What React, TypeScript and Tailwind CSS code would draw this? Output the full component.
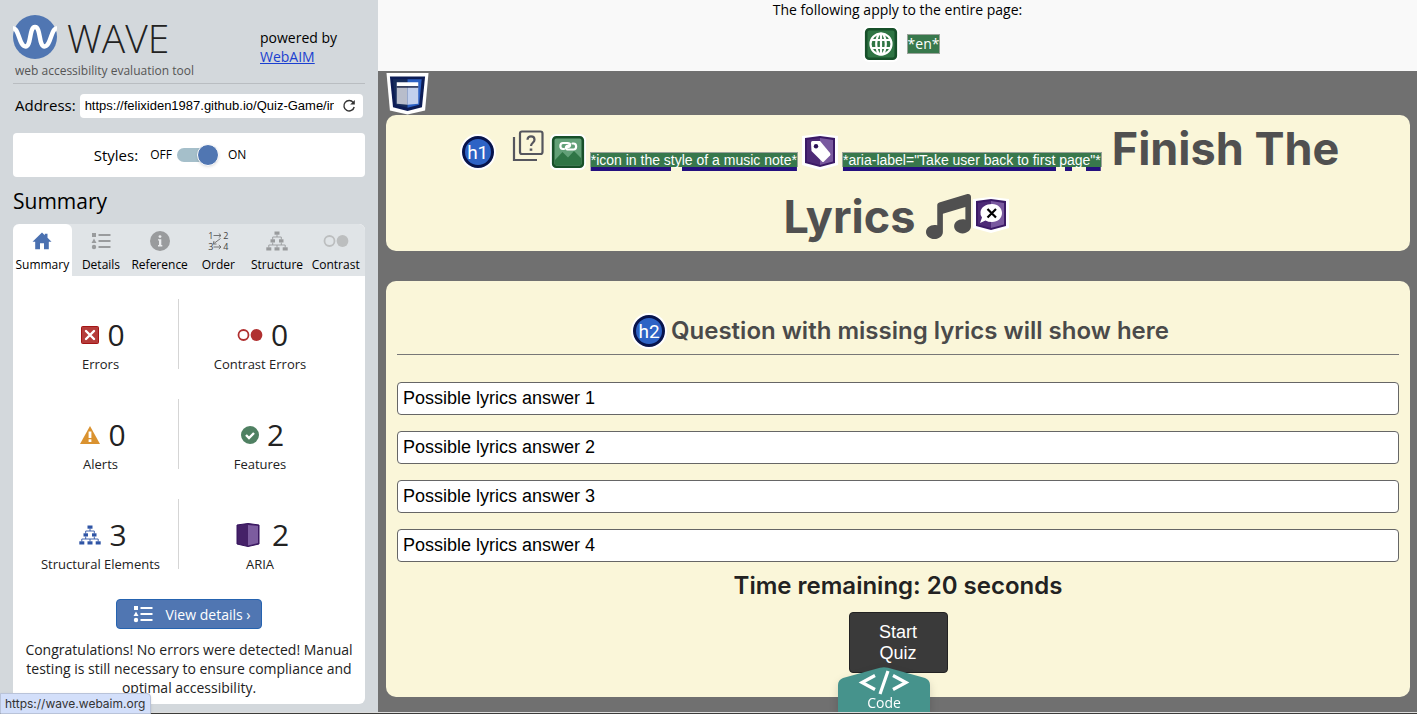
import React from "react";
import { FaMusic } from "react-icons/fa6";

type IconProps = { className?: string };

function WaveLogo({ className }: IconProps) {
  return (
    <svg viewBox="0 0 44 44" className={className} aria-hidden="true">
      <circle cx="22" cy="22" r="22" fill="#5076b2" />
      <path
        d="M0 13.500C6 12.500 6 31.500 12.500 31.500C18.500 31.500 16 12 22 12C28 12 25.500 31.500 31.500 31.500C38 31.500 38 12.500 44 13.500"
        fill="none"
        stroke="#fff"
        strokeWidth="4.400"
      />
    </svg>
  );
}

function ReloadIcon({ className }: IconProps) {
  return (
    <svg viewBox="0 0 14 14" className={className} aria-hidden="true">
      <path d="M11.300 3.600A5.200 5.200 0 1 0 12.200 8" fill="none" stroke="#333" strokeWidth="1.400" />
      <path d="M12.800 1V5.600H8.200Z" fill="#333" />
    </svg>
  );
}

function HomeIcon({ className }: IconProps) {
  return (
    <svg viewBox="0 0 20 20" className={className} aria-hidden="true">
      <path d="M10 1.500L12.800 4.200V2.800H15.500V6.800L19.500 10.700H16.800V18.300H12V12.300H8V18.300H3.200V10.700H.5Z" fill="#4a70b0" />
    </svg>
  );
}

function ListIcon({ className }: IconProps) {
  return (
    <svg viewBox="0 0 20 18" className={className} fill="currentColor" aria-hidden="true">
      <rect x="1" y="1" width="4" height="4" />
      <path d="M3 6.500L5.500 11H.5Z" />
      <circle cx="3" cy="15" r="2.200" />
      <rect x="7.500" y="2" width="12" height="2" />
      <rect x="7.500" y="8" width="12" height="2" />
      <rect x="7.500" y="14" width="12" height="2" />
    </svg>
  );
}

function InfoIcon({ className }: IconProps) {
  return (
    <svg viewBox="0 0 20 20" className={className} aria-hidden="true">
      <circle cx="10" cy="10" r="10" fill="#999b9d" />
      <circle cx="10" cy="5.600" r="1.400" fill="#e9ebed" />
      <path d="M8 8.200H11.300V14H12.300V15.500H8V14H9V9.600H8Z" fill="#e9ebed" />
    </svg>
  );
}

function OrderIcon() {
  return (
    <span className="relative flex h-5 w-5 flex-col justify-between text-[9px] leading-[9px] text-[#444]">
      <span className="flex w-5 justify-between"><span>1</span><span>2</span></span>
      <span className="flex w-5 justify-between"><span>3</span><span>4</span></span>
      <svg viewBox="0 0 20 20" className="absolute inset-0 h-5 w-5" fill="none" stroke="#666" strokeWidth=".9" aria-hidden="true">
        <path d="M5.500 4.500H13M10.800 2.500L13 4.500L10.800 6.500M5.500 16H13M10.800 14L13 16L10.800 18M12.500 7.500L5.500 12.800M6 10L5.200 13H8.500" />
      </svg>
    </span>
  );
}

function TreeIcon({ className }: IconProps) {
  return (
    <svg viewBox="0 0 22 20" className={className} fill="currentColor" aria-hidden="true">
      <rect x="8.500" y=".5" width="5" height="3.200" />
      <rect x="4.500" y="8.300" width="4.500" height="3.200" />
      <rect x="13" y="8.300" width="4.500" height="3.200" />
      <rect x=".3" y="16.300" width="5" height="3.200" />
      <rect x="8.500" y="16.300" width="5" height="3.200" />
      <rect x="16.700" y="16.300" width="5" height="3.200" />
      <path
        d="M11 3.500V6M6.700 8.500V6H15.300V8.500M6.700 11.500V14M15.300 11.500V14M2.800 16.500V14H19.200V16.500M11 14V16.500"
        fill="none"
        stroke="currentColor"
        strokeWidth=".9"
      />
    </svg>
  );
}

function CirclesIcon({ className }: IconProps) {
  return (
    <svg viewBox="0 0 26 12" className={className} aria-hidden="true">
      <circle cx="6.500" cy="6" r="5" fill="none" stroke="currentColor" strokeWidth="1.800" />
      <circle cx="19.500" cy="6" r="5.900" fill="currentColor" />
    </svg>
  );
}

function ErrorIcon({ className }: IconProps) {
  return (
    <svg viewBox="0 0 18 18" className={className} aria-hidden="true">
      <rect x=".5" y=".5" width="17" height="17" rx="1" fill="#b53c3a" stroke="#a31515" />
      <path d="M5 5L13 13M13 5L5 13" stroke="#fff" strokeWidth="2.400" strokeLinecap="round" />
    </svg>
  );
}

function AlertIcon({ className }: IconProps) {
  return (
    <svg viewBox="0 0 20 18" className={className} aria-hidden="true">
      <path d="M10 0L20 18H0Z" fill="#da922f" />
      <path d="M8.600 5.500H11.400V12H8.600ZM8.600 13.300H11.400V16H8.600Z" fill="#fff" />
    </svg>
  );
}

function FeatureIcon({ className }: IconProps) {
  return (
    <svg viewBox="0 0 18 18" className={className} aria-hidden="true">
      <circle cx="9" cy="9" r="9" fill="#4f8062" />
      <path d="M5 9L8 12L13 7" fill="none" stroke="#fff" strokeWidth="2.400" />
    </svg>
  );
}

function AriaIcon({ className }: IconProps) {
  return (
    <svg viewBox="0 0 24 24" className={className} aria-hidden="true">
      <path d="M1 2L12 .5L23 2V21L12 23.500L1 21Z" fill="#452168" stroke="#34125c" />
      <path d="M12 2L22 3V20L12 22.500Z" fill="#7c5c9f" />
    </svg>
  );
}

function GlobeBadge({ className }: IconProps) {
  return (
    <svg viewBox="0 0 36 36" className={className} aria-hidden="true">
      <rect width="36" height="36" rx="6" fill="#fff" />
      <rect x="3.200" y="3.200" width="29.600" height="29.600" rx="3" fill="#2f7544" stroke="#17502a" strokeWidth="2.600" />
      <g fill="none" stroke="#fff" strokeWidth="2.200">
        <circle cx="18" cy="18" r="10.500" />
        <ellipse cx="18" cy="18" rx="4.800" ry="10.500" />
        <path d="M18 7.500V28.500M9 14H27M9 22H27" />
      </g>
    </svg>
  );
}

function BannerBadge({ className }: IconProps) {
  return (
    <svg viewBox="0 0 44 43" className={className} aria-hidden="true">
      <path d="M.5 .5H43.500L40 39L22 43L4 39Z" fill="#fff" />
      <path d="M4 4H40L36.800 35.500L22 39.500L7.200 35.500Z" fill="#0c1c55" />
      <path d="M7 7H22V36L10 33Z" fill="#172d5c" />
      <path d="M22 7H36.500L34 33L22 36Z" fill="#2c61c4" />
      <path d="M11 14H22V33L11 32Z" fill="#b8bdcb" />
      <path d="M22 14H33V32L22 33Z" fill="#c2d0ed" />
      <rect x="11" y="10" width="22" height="4" fill="#fff" />
      <path d="M11 14.800H33" stroke="#101a3c" strokeWidth="1.400" />
    </svg>
  );
}

function HeadingBadge({ label }: { label: string }) {
  return (
    <span className="flex h-9 w-9 shrink-0 items-center justify-center rounded-full bg-white">
      <span className="flex h-8 w-8 items-center justify-center rounded-full border-3 border-[#07144d] bg-[#2e63c5] font-['Roboto',sans-serif] text-[19px] leading-none font-normal text-white">
        {label}
      </span>
    </span>
  );
}

function QuizBoxIcon({ className }: IconProps) {
  return (
    <svg viewBox="0 0 32 32" className={className} fill="none" stroke="#55565e" strokeWidth="2.200" aria-hidden="true">
      <rect x="8" y="1.500" width="22.500" height="22.500" rx="2" />
      <path d="M2 7V30H25" />
      <path d="M15.500 9.700C15.500 5.200 22.500 5.200 22.500 9.700C22.500 12.500 19 13 19 16" />
      <path d="M19 18.500V20.800" strokeWidth="2.600" />
    </svg>
  );
}

function LinkedImageBadge({ className }: IconProps) {
  return (
    <svg viewBox="0 0 36 36" className={className} aria-hidden="true">
      <rect width="36" height="36" rx="6" fill="#fff" />
      <rect x="3.200" y="3.200" width="29.600" height="29.600" rx="3" fill="#62a078" stroke="#17502a" strokeWidth="2.600" />
      <path d="M5 26L12.500 18L18 23.500L24 17L31 24V31H5Z" fill="#2f7546" />
      <path
        d="M14 15H13C9.500 15 9.500 9 13 9H17.500C21.500 9 20.500 13 17.500 13M22.500 9.500H23.500C27 9.500 27 15.500 23.500 15.500H18.500C14.500 15.500 15.500 11.500 18.500 11.500"
        fill="none"
        stroke="#fff"
        strokeWidth="2.200"
        strokeLinecap="round"
      />
    </svg>
  );
}

function AriaBadge({ className, children }: { className?: string; children: React.ReactNode }) {
  return (
    <svg viewBox="0 0 36 36" className={className} aria-hidden="true">
      <path d="M0 2L18 0L36 2V31L18 36L0 31Z" fill="#fff" />
      <path d="M3 4L18 2L33 4V29L18 33L3 29Z" fill="#3b1a66" />
      <path d="M5 6L18 4V31L5 27.500Z" fill="#4d2a76" />
      <path d="M18 4L31 6V27.500L18 31Z" fill="#79599f" />
      {children}
    </svg>
  );
}

function Annotation({ children }: { children: React.ReactNode }) {
  return (
    <span className="mt-[14px] shrink-0 border border-b-0 border-[#9aa39a] bg-[#38784c] font-['Liberation_Sans',Arial,sans-serif] text-[14px] leading-[14px] font-normal whitespace-nowrap text-white underline decoration-[#24107e] decoration-4 underline-offset-2">
      {children}
    </span>
  );
}

const tabs = [
  { name: "Summary", icon: <HomeIcon className="h-5 w-5" /> },
  { name: "Details", icon: <ListIcon className="h-[18px] w-5 text-[#999b9d]" /> },
  { name: "Reference", icon: <InfoIcon className="h-5 w-5" /> },
  { name: "Order", icon: <OrderIcon /> },
  { name: "Structure", icon: <TreeIcon className="h-5 w-[22px] text-[#999b9d]" /> },
  { name: "Contrast", icon: <CirclesIcon className="h-3 w-[26px] text-[#bcbebf]" /> },
];

const stats = [
  { name: "Errors", count: 0, icon: <ErrorIcon className="h-[18px] w-[18px]" /> },
  { name: "Contrast Errors", count: 0, icon: <CirclesIcon className="h-3 w-[26px] text-[#b03030]" /> },
  { name: "Alerts", count: 0, icon: <AlertIcon className="h-[18px] w-5" /> },
  { name: "Features", count: 2, icon: <FeatureIcon className="h-[18px] w-[18px]" /> },
  { name: "Structural Elements", count: 3, icon: <TreeIcon className="h-5 w-[22px] text-[#2f55a5]" /> },
  { name: "ARIA", count: 2, icon: <AriaIcon className="mr-1 h-6 w-6" /> },
];

function Sidebar() {
  return (
    <aside className="flex w-[378px] shrink-0 flex-col bg-[#d3d8dc] px-[13px] pb-2">
      <header className="flex h-[83px] shrink-0 justify-between pt-[15px]">
        <div>
          <div className="flex items-center gap-[10px]">
            <WaveLogo className="h-11 w-11" />
            <span className="pt-px text-[39px] leading-[43px] font-light text-[#222]">WAVE</span>
          </div>
          <p className="pl-[2px] text-[12px] leading-6 text-[#555]">web accessibility evaluation tool</p>
        </div>
        <p className="w-[105px] pt-[13px] text-[14px] leading-[19px]">
          powered by
          <br />
          <a href="#webaim" className="text-[#1a3fd0] underline">WebAIM</a>
        </p>
      </header>
      <div className="flex shrink-0 items-center gap-1 border-t border-[#b9bdc1] pt-[9px] pl-[2px]">
        <label htmlFor="address" className="pb-[2px] text-[15px] leading-6">Address:</label>
        <div className="mr-[2px] flex h-6 min-w-0 flex-1 items-center rounded bg-white pr-[7px] pl-[5px]">
          <input
            id="address"
            type="text"
            defaultValue="https://felixiden1987.github.io/Quiz-Game/index.html"
            className="w-0 min-w-0 flex-1 bg-transparent font-['Liberation_Sans',Arial,sans-serif] text-[13px] outline-none"
          />
          <button type="button" aria-label="Reload" className="ml-2">
            <ReloadIcon className="h-[14px] w-[14px]" />
          </button>
        </div>
      </div>
      <div className="mt-[14px] flex h-11 shrink-0 items-center justify-center rounded bg-white pr-[38px] text-[12px]">
        <span className="mr-3 text-[15px]">Styles:</span>
        <span>OFF</span>
        <label className="relative mx-[5px] h-[22px] w-[42px]">
          <input type="checkbox" defaultChecked aria-label="Styles" className="peer sr-only" />
          <span className="absolute top-1 left-0 h-[14px] w-9 rounded-full bg-[#a5bfca]" />
          <span className="absolute top-0 left-5 h-[22px] w-[22px] rounded-full border border-white bg-[#5076b2] shadow" />
        </label>
        <span className="ml-1">ON</span>
      </div>
      <h2 className="shrink-0 pt-2 text-[21px] leading-8">Summary</h2>
      <section className="mt-[7px] flex min-h-0 flex-1 flex-col overflow-hidden rounded-md bg-white">
        <div role="tablist" className="grid h-[52px] shrink-0 grid-cols-6 bg-[#e0e4e7]">
          {tabs.map((tab, i) => (
            <button
              key={tab.name}
              type="button"
              role="tab"
              aria-selected={i === 0}
              className="flex flex-col items-center text-[12px] aria-selected:rounded-t-md aria-selected:bg-white"
            >
              <span className="flex h-[34px] items-center justify-center">{tab.icon}</span>
              <span className="leading-[14px]">{tab.name}</span>
            </button>
          ))}
        </div>
        <div className="grid shrink-0 grid-cols-2 gap-y-[30px] pt-[23px] pr-[30px] pl-[10px]">
          {stats.map((stat) => (
            <div
              key={stat.name}
              className="flex h-[70px] flex-col items-center pt-4 text-[#222] odd:border-r odd:border-[#d5d5d5] even:pl-[6px]"
            >
              <div className="flex items-center gap-2 pl-[5px]">
                {stat.icon}
                <span className="text-[30px] leading-10">{stat.count}</span>
              </div>
              <span className="text-[13px] leading-[18px] whitespace-nowrap">{stat.name}</span>
            </div>
          ))}
        </div>
        <button
          type="button"
          className="mx-auto mt-[30px] flex h-[30px] shrink-0 items-center gap-3 rounded border border-[#2563b0] bg-[#5076b2] px-[10px] pl-4 text-[14px] text-white"
        >
          <ListIcon className="h-[18px] w-5" />
          <span>View details ›</span>
        </button>
        <p className="shrink-0 px-2 pt-[11px] text-center text-[14px] leading-[19px] text-[#222]">
          Congratulations! No errors were detected! Manual testing is still necessary to ensure compliance and optimal accessibility.
        </p>
      </section>
    </aside>
  );
}

const answers = ["Possible lyrics answer 1", "Possible lyrics answer 2", "Possible lyrics answer 3", "Possible lyrics answer 4"];

function QuizPage() {
  return (
    <main className="relative flex min-w-0 flex-1 flex-col overflow-hidden bg-[#707070]">
      <header className="flex h-[71px] shrink-0 flex-col items-center bg-[#f9f9f9]">
        <p className="text-[14px] leading-5">The following apply to the entire page:</p>
        <div className="mt-[6px] flex items-center gap-2 pl-2">
          <GlobeBadge className="h-9 w-9" />
          <span className="border border-[#9aa39a] bg-[#38784c] text-[14px] leading-[18px] text-white">*en*</span>
        </div>
      </header>
      <div className="flex flex-col pt-px pr-[7px] pl-2">
        <BannerBadge className="h-[43px] w-[43px]" />
        <section className="rounded-[10px] bg-[#faf6d9]">
          <h1 className="font-['Inter',sans-serif] text-[45px] leading-[68px] font-bold text-[#505050]">
            <span className="flex h-[68px] items-center justify-center gap-[10px] pl-[3px]">
              <span className="flex items-center gap-1 pt-[6px]">
                <HeadingBadge label="h1" />
                <QuizBoxIcon className="mb-3 ml-3 h-8 w-8 shrink-0" />
                <LinkedImageBadge className="ml-[2px] h-9 w-9 shrink-0" />
                <Annotation>*icon in the style of a music note*</Annotation>
                <AriaBadge className="h-9 w-9 shrink-0">
                  <path d="M9 8.500Q9 7 10.500 7H18L28 19Q29 20.500 28 21.500L22 27.500Q21 28.500 20 27.500L9.500 17Z" fill="#fff" />
                  <circle cx="14" cy="12.300" r="2.200" fill="#2c1257" />
                </AriaBadge>
                <Annotation>*aria-label="Take user back to first page"*</Annotation>
              </span>
              <span className="whitespace-nowrap">Finish The</span>
            </span>
            <span className="flex h-[68px] items-center justify-center pr-1">
              <span>Lyrics</span>
              <FaMusic className="mb-[2px] ml-[10px] h-[45px] w-[45px]" />
              <AriaBadge className="mb-1 ml-[2px] h-9 w-9">
                <path d="M19 7C25 7 29 11 29 16C29 21 25 25 19 25Q15 25 12.500 23.500L7 26L9 20.500Q7 18 7.500 15C8 10 13 7 19 7Z" fill="#fff" />
                <path d="M14.500 12L23 20.500M23 12L14.500 20.500" stroke="#000" strokeWidth="2.200" />
              </AriaBadge>
            </span>
          </h1>
        </section>
        <section className="mt-[30px] flex flex-col rounded-[10px] bg-[#faf6d9] px-[11px] pt-[31px] pb-6">
          <h2 className="flex h-[43px] items-center justify-center gap-1 border-b border-[#777] pb-1 pl-1 font-['Inter',sans-serif] text-[24px] font-semibold text-[#4a4a4a]">
            <HeadingBadge label="h2" />
            <span>Question with missing lyrics will show here</span>
          </h2>
          <div className="mt-[27px] flex flex-col gap-4">
            {answers.map((answer) => (
              <button
                key={answer}
                type="button"
                className="h-[33px] rounded border border-[#666] bg-white px-[5px] text-left font-['Liberation_Sans',Arial,sans-serif] text-[18px]"
              >
                {answer}
              </button>
            ))}
          </div>
          <p className="mt-[6px] text-center font-['Inter',sans-serif] text-[24px] leading-9 font-semibold text-[#222]">
            Time remaining: 20 seconds
          </p>
          <button
            type="button"
            className="mx-auto mt-2 h-[61px] w-[99px] rounded border border-[#222] bg-[#3a3a3a] px-5 font-['Liberation_Sans',Arial,sans-serif] text-[18px] leading-[21px] text-white"
          >
            Start Quiz
          </button>
        </section>
      </div>
      <button type="button" className="absolute bottom-0 left-[460px] flex h-[45px] w-[92px] flex-col items-center drop-shadow-lg">
        <svg viewBox="0 0 92 45" className="absolute inset-0 h-full w-full" aria-hidden="true">
          <path d="M0 45V18Q0 13 5 11L42 .8Q46 -.4 50 .8L87 11Q92 13 92 18V45Z" fill="#46938c" />
          <path d="M37 8.500L24 15.500L37 22.500M55 8.500L68 15.500L55 22.500M50 4L42 27" fill="none" stroke="#fff" strokeWidth="3.200" />
        </svg>
        <span className="relative mt-[27px] text-[14px] leading-[18px] text-white">Code</span>
      </button>
    </main>
  );
}

export default function App() {
  return (
    <div className="relative flex h-screen flex-col overflow-hidden bg-[#3c3c3a] font-['Open_Sans',sans-serif] text-black">
      <div className="flex min-h-0 flex-1 border-b border-[#ddd]">
        <Sidebar />
        <QuizPage />
      </div>
      <div className="h-px shrink-0" />
      <div className="absolute bottom-0 left-0 flex h-[21px] w-[151px] items-center rounded-tr border border-[#b9c3d9] bg-[#d3dffa] pl-1 font-['Inter',sans-serif] text-[12px] text-[#333] shadow">
        https://wave.webaim.org
      </div>
    </div>
  );
}
